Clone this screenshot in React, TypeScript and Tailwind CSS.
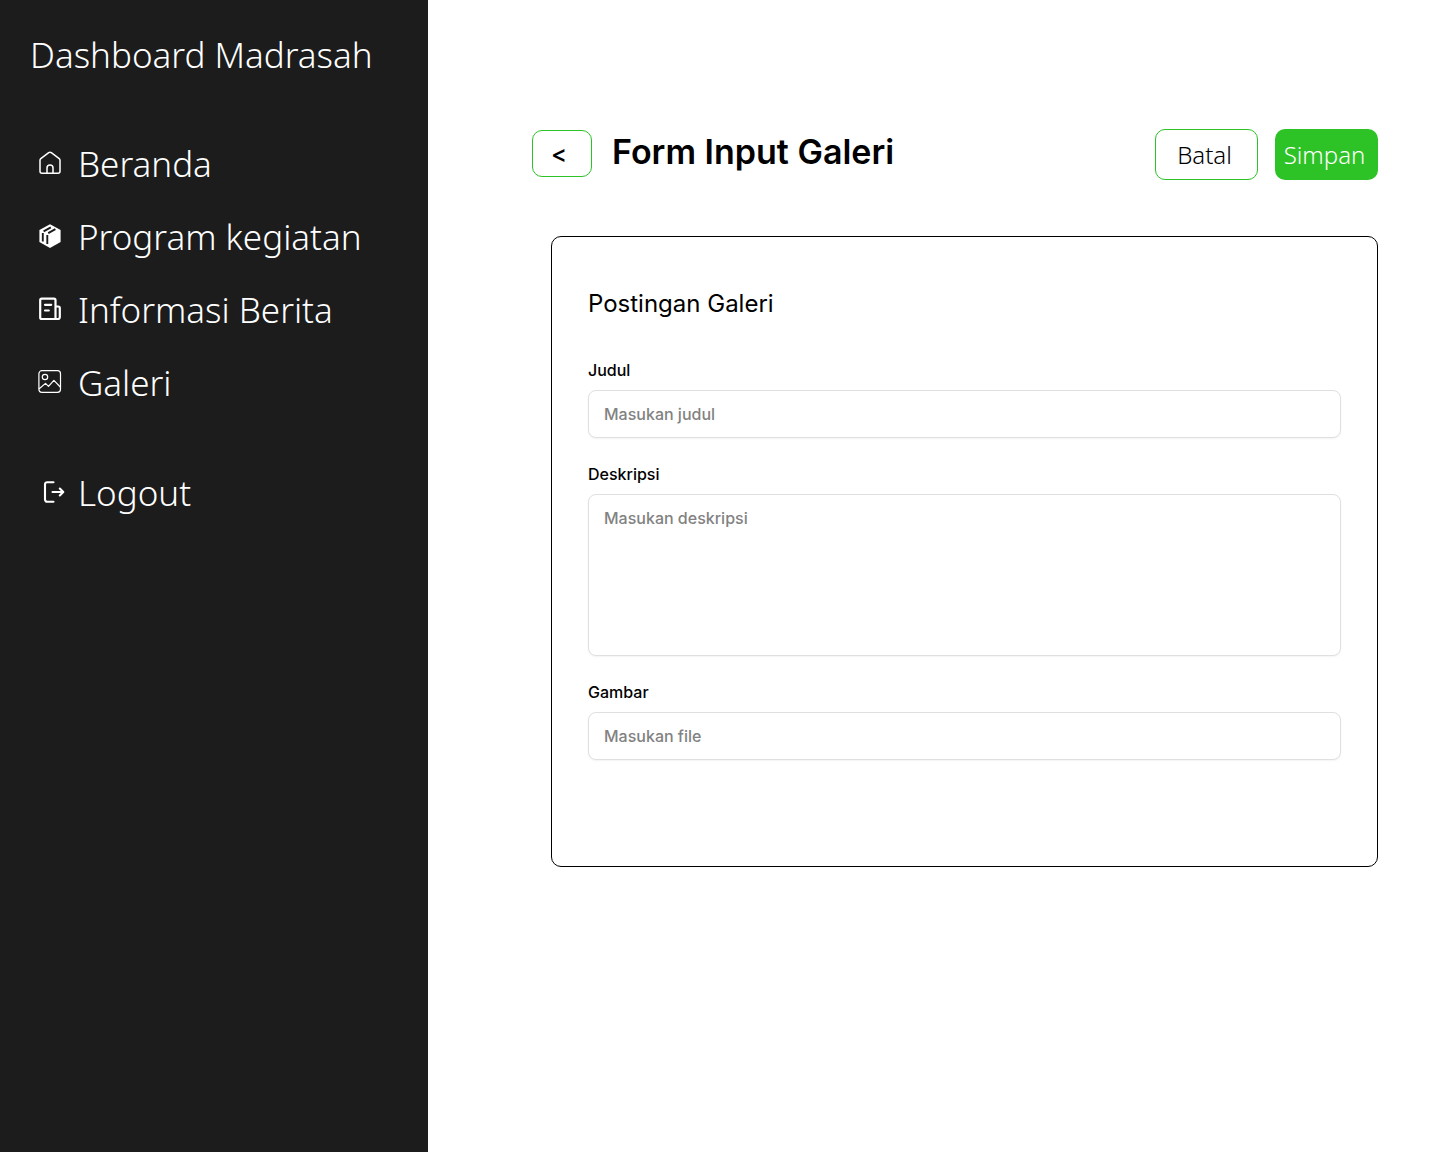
import React from "react";

function HomeIcon() {
  return (
    <svg viewBox="0 0 24 24" className="size-6" fill="none" stroke="currentColor" strokeWidth="1.5" strokeLinecap="round" strokeLinejoin="round" aria-hidden="true">
      <path d="M2 9.300a2 2 0 0 1 .8-1.600l7.900-6a2.200 2.200 0 0 1 2.600 0l7.900 6a2 2 0 0 1 .8 1.600V20.300a2 2 0 0 1-2 2H4a2 2 0 0 1-2-2z" />
      <path d="M9 22.200v-5.200a3 3 0 0 1 6 0v5.200" />
    </svg>
  );
}

function BoxIcon() {
  return (
    <svg viewBox="0 0 24 24" className="size-6" aria-hidden="true">
      <path fill="currentColor" d="M12 0.300 22.600 6v12L12 24 1.400 18V6z" />
      <g fill="none" stroke="#1c1c1c" strokeWidth="1.900">
        <path d="M5.600 7.300 12.800 3.300" />
        <path d="M10.200 9.200 17.400 5.200" />
        <path d="M4.800 9v8.500" />
        <path d="M9.300 11v9" />
      </g>
    </svg>
  );
}

function NewsIcon() {
  return (
    <svg viewBox="0 0 24 24" className="size-6" fill="none" stroke="currentColor" strokeWidth="2.200" strokeLinecap="round" strokeLinejoin="round" aria-hidden="true">
      <path d="M17.500 22V3.200a1.500 1.500 0 0 0-1.500-1.500H3.700a1.500 1.500 0 0 0-1.500 1.500v17.300A1.500 1.500 0 0 0 3.700 22H20a1.800 1.800 0 0 0 1.800-1.800V11a1.500 1.500 0 0 0-1.500-1.500h-2.800" />
      <path d="M7 7.800H13.200M7 13.500H10.800" />
    </svg>
  );
}

function GalleryIcon() {
  return (
    <svg viewBox="0 0 24 24" className="size-6" fill="none" stroke="currentColor" strokeWidth="1.200" strokeLinecap="round" strokeLinejoin="round" aria-hidden="true">
      <rect x="0.900" y="0.700" width="21.600" height="21.600" rx="3" />
      <circle cx="7" cy="7" r="2.700" />
      <path d="M1.200 18.700 7.500 13.400l3 3 5.400-6 6.400 6.600" />
    </svg>
  );
}

function LogoutIcon() {
  return (
    <svg viewBox="0 0 24 24" className="size-6" fill="none" stroke="currentColor" strokeWidth="2.100" strokeLinecap="round" strokeLinejoin="round" aria-hidden="true">
      <path d="M11.500 2.200H5.200A2.200 2.200 0 0 0 3 4.400v15.200a2.200 2.200 0 0 0 2.200 2.200h6.300" />
      <path d="M10.500 12H21M17.800 8.500 21.300 12l-3.500 3.500" />
    </svg>
  );
}

const links = [
  { label: "Beranda", icon: <HomeIcon /> },
  { label: "Program kegiatan", icon: <BoxIcon /> },
  { label: "Informasi Berita", icon: <NewsIcon /> },
  { label: "Galeri", icon: <GalleryIcon /> },
];

function NavLink({ label, icon }: { label: string; icon: React.ReactNode }) {
  return (
    <a href="#" className="flex h-11 items-center gap-4 whitespace-nowrap text-[35px] leading-11">
      {icon}
      <span className="pt-0.5">{label}</span>
    </a>
  );
}

const fieldClass =
  "block w-full rounded-lg border border-[#e0e0e0] bg-white px-[15px] text-base font-medium shadow-xs placeholder:text-[#828282]";

export default function App() {
  return (
    <div className="flex min-h-screen bg-white font-['Inter',sans-serif] text-black">
      <aside className="w-[428px] shrink-0 bg-[#1c1c1c] pt-[33px] pl-[30px] font-['Noto_Sans',sans-serif] font-light text-white">
        <p className="whitespace-nowrap text-[35px] leading-11">Dashboard Madrasah</p>
        <nav className="mt-16 flex flex-col gap-[29px] pl-2">
          {links.map((l) => (
            <NavLink key={l.label} label={l.label} icon={l.icon} />
          ))}
          <div className="mt-[37px] pl-1">
            <a href="#" className="flex h-11 items-center gap-3 text-[35px] leading-11">
              <LogoutIcon />
              <span className="pt-0.5">Logout</span>
            </a>
          </div>
        </nav>
      </aside>

      <main className="min-w-0 flex-1 pt-[129px] pr-[62px] pl-[104px]">
        <header className="flex items-start">
          <button type="button" aria-label="Kembali" className="mt-px h-[47px] w-15 rounded-[10px] border border-[#2dc226] pr-1.5 text-2xl font-medium">
            &lt;
          </button>
          <h1 className="ml-5 whitespace-nowrap text-[34px] leading-[46px] font-semibold">Form Input Galeri</h1>
          <div className="ml-auto flex gap-[17px] font-['Noto_Sans',sans-serif] text-2xl font-light">
            <button type="button" className="h-[51px] w-[103px] rounded-[10px] border border-[#2dc226] pr-1">
              Batal
            </button>
            <button type="submit" form="gallery-form" className="h-[51px] w-[103px] rounded-[10px] bg-[#2dc226] pr-1 text-white">
              Simpan
            </button>
          </div>
        </header>

        <form id="gallery-form" className="mt-14 ml-[19px] rounded-[10px] border border-black px-9 pt-[51px] pb-[106px]">
          <h2 className="text-2xl leading-8">Postingan Galeri</h2>
          <div className="mt-[38px] flex flex-col gap-6">
            <div className="flex flex-col gap-2">
              <label htmlFor="judul" className="font-medium">Judul</label>
              <input id="judul" type="text" placeholder="Masukan judul" className={`${fieldClass} h-12`} />
            </div>
            <div className="flex flex-col gap-2">
              <label htmlFor="deskripsi" className="font-medium">Deskripsi</label>
              <textarea id="deskripsi" placeholder="Masukan deskripsi" className={`${fieldClass} h-[162px] resize-none py-[11px]`} />
            </div>
            <div className="flex flex-col gap-2">
              <label htmlFor="gambar" className="font-medium">Gambar</label>
              <input id="gambar" type="text" placeholder="Masukan file" className={`${fieldClass} h-12`} />
            </div>
          </div>
        </form>
      </main>
    </div>
  );
}
